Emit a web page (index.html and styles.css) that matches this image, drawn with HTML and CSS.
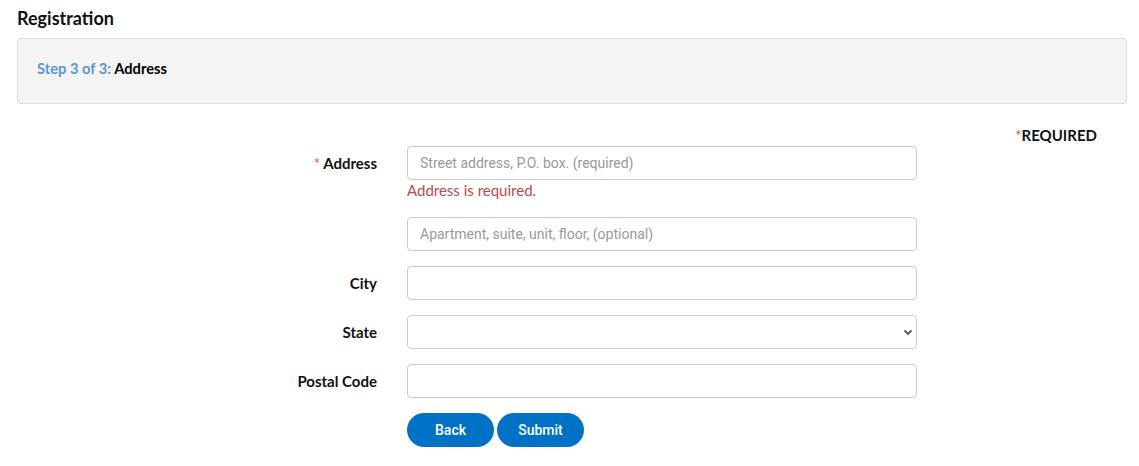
FILE: index.html
```html
<!DOCTYPE html>
<html>
<head>
<meta charset="utf-8">
<link rel="stylesheet" href="styles.css">
</head>
<body>
<div class="page">
  <h1 class="title">Registration</h1>
  <div class="step-panel">
    <p class="step-text"><span class="step-num">Step 3 of 3:</span> <span class="step-name">Address</span></p>
  </div>
  <div class="required-note"><span class="star">*</span>REQUIRED</div>
  <form class="form">
    <label class="label" for="addr1"><span class="star">*</span> Address</label>
    <div class="field">
      <input id="addr1" class="input" type="text" placeholder="Street address, P.O. box. (required)">
      <div class="error">Address is required.</div>
    </div>

    <div class="label"></div>
    <div class="field">
      <input class="input" type="text" placeholder="Apartment, suite, unit, floor, (optional)">
    </div>

    <label class="label" for="city">City</label>
    <div class="field"><input id="city" class="input" type="text"></div>

    <label class="label" for="state">State</label>
    <div class="field">
      <div class="select-wrap">
        <select id="state" class="input select"><option></option></select>
        <svg class="chev" width="10" height="7" viewBox="0 0 10 7"><path d="M1.5 1.5 L5 5 L8.5 1.5" fill="none" stroke="#555" stroke-width="1.8"/></svg>
      </div>
    </div>

    <label class="label" for="zip">Postal Code</label>
    <div class="field"><input id="zip" class="input" type="text"></div>

    <div class="label"></div>
    <div class="buttons">
      <button type="button" class="btn btn-back">Back</button>
      <button type="button" class="btn btn-submit">Submit</button>
    </div>
  </form>
</div>
</body>
</html>
```
FILE: styles.css
```css
html, body {
  margin: 0;
  padding: 0;
  background: #ffffff;
}
body {
  font-family: Lato, "Liberation Sans", sans-serif;
  color: #000;
}
.page {
  padding: 7px 12px 0 17px;
}
.title {
  font-family: Lato, sans-serif;
  font-weight: 700;
  font-size: 18px;
  line-height: 22px;
  margin: 0 0 9px 0;
  color: #111;
}
.step-panel {
  background: #f4f4f4;
  border: 1px solid #dedede;
  border-radius: 4px;
  height: 64px;
  display: flex;
  align-items: center;
  padding-left: 19px;
}
.step-text {
  margin: 0 0 6px 0;
  font-size: 14.7px;
  font-weight: 700;
  line-height: 18px;
}
.step-num {
  color: #5b97d1;
}
.step-name {
  color: #000;
}
.required-note {
  text-align: right;
  padding-right: 30px;
  margin-top: 22px;
  font-size: 15px;
  font-weight: 700;
  line-height: 18px;
  color: #111;
}
.star {
  color: #e5572f;
  font-weight: 400;
}
.form {
  display: grid;
  grid-template-columns: 360px 510px;
  column-gap: 30px;
  row-gap: 15px;
  margin-top: 2px;
}
.label {
  font-size: 15px;
  font-weight: 700;
  text-align: right;
  height: 34px;
  line-height: 34px;
  color: #111;
}
.field {
  display: flex;
  flex-direction: column;
}
.input {
  box-sizing: border-box;
  width: 510px;
  height: 34px;
  border: 1px solid #cccccc;
  border-radius: 4px;
  padding: 0 12px;
  font-family: Roboto, sans-serif;
  font-size: 14px;
  color: #333;
  background: #fff;
  margin: 0;
  outline: none;
}
.input::placeholder {
  color: #999999;
}
.error {
  font-family: Lato, sans-serif;
  font-size: 15px;
  line-height: 20px;
  margin-top: 0;
  color: #b94a48;
  margin-bottom: 2px;
}
.select-wrap {
  position: relative;
  width: 510px;
}
.select {
  appearance: none;
  -webkit-appearance: none;
  display: block;
}
.chev {
  position: absolute;
  right: 4px;
  top: 14px;
  pointer-events: none;
}
.buttons {
  display: flex;
  gap: 3px;
}
.btn {
  height: 34px;
  border: none;
  border-radius: 17px;
  background: #0072c5;
  color: #fff;
  font-family: Roboto, sans-serif;
  font-size: 14px;
  font-weight: 500;
  padding: 0;
  cursor: pointer;
}
.btn-back {
  width: 87px;
}
.btn-submit {
  width: 87px;
}
```
